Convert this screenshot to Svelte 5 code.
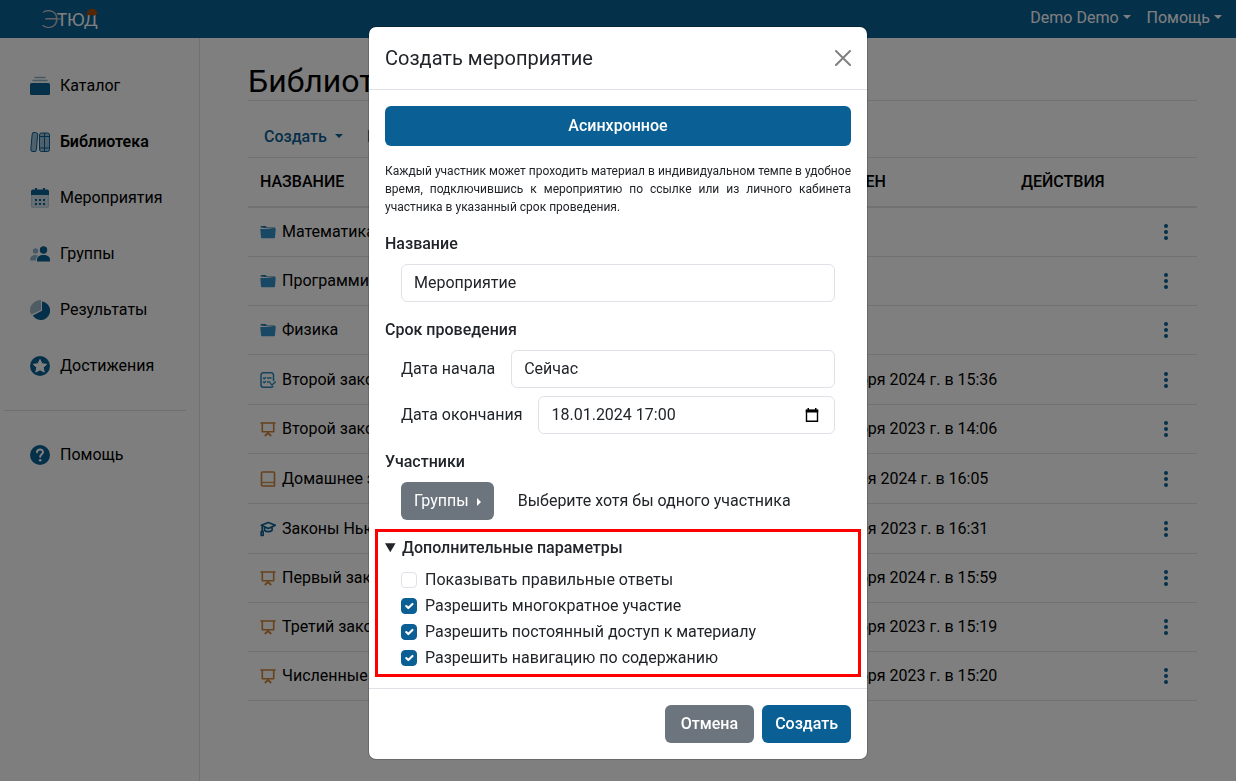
<script lang="ts">
	let name = $state('Мероприятие');
	let start = $state('Сейчас');
	let end = $state('18.01.2024 17:00');

	let options = $state([
		{ id: 'answers', label: 'Показывать правильные ответы', checked: false },
		{ id: 'repeat', label: 'Разрешить многократное участие', checked: true },
		{ id: 'access', label: 'Разрешить постоянный доступ к материалу', checked: true },
		{ id: 'navigation', label: 'Разрешить навигацию по содержанию', checked: true }
	]);

	const menu = [
		{ icon: 'catalog', label: 'Каталог' },
		{ icon: 'library', label: 'Библиотека', active: true },
		{ icon: 'events', label: 'Мероприятия' },
		{ icon: 'groups', label: 'Группы' },
		{ icon: 'results', label: 'Результаты' },
		{ icon: 'awards', label: 'Достижения' }
	];

	const rows = [
		{ icon: 'folder', title: 'Математика', date: '' },
		{ icon: 'folder', title: 'Программирование', date: '' },
		{ icon: 'folder', title: 'Физика', date: '' },
		{ icon: 'quiz', title: 'Второй закон Ньютона', date: '11 ноября 2024 г. в 15:36', tall: true },
		{ icon: 'board', title: 'Второй закон Ньютона', date: '14 ноября 2023 г. в 14:06' },
		{ icon: 'book', title: 'Домашнее задание', date: '5 января 2024 г. в 16:05', tall: true },
		{ icon: 'course', title: 'Законы Ньютона', date: '4 января 2023 г. в 16:31', tall: true },
		{ icon: 'board', title: 'Первый закон Ньютона', date: '11 ноября 2024 г. в 15:59' },
		{ icon: 'board', title: 'Третий закон Ньютона', date: '14 ноября 2023 г. в 15:19' },
		{ icon: 'board', title: 'Численные методы', date: '14 ноября 2023 г. в 15:20' }
	];
</script>

{#snippet menuIcon(icon: string)}
	<svg class="menu-icon" viewBox="0 0 20 20" aria-hidden="true">
		{#if icon === 'catalog'}
			<path d="M5 1.500h10M3 4.500h14" stroke="#8fb3cb" stroke-width="1.500" stroke-linecap="round" />
			<rect x="0" y="7" width="20" height="12" rx="1.500" fill="#0a6094" />
		{:else if icon === 'library'}
			<g fill="#9fc3da" stroke="#0a6094">
				<rect x="1.500" y=".5" width="5.500" height="19" rx="2" transform="rotate(5 4 10)" />
				<rect x="9.500" y="1" width="10" height="18.500" rx="2" />
				<path d="M14.500 1v18.500M9.500 4.500h10M9.500 16h10" />
			</g>
		{:else if icon === 'events'}
			<rect x="1.500" y="3" width="17" height="17" rx="2" fill="#cfdee8" stroke="#b5cbd9" />
			<path d="M1 7V3.500a2 2 0 0 1 2-2h2V0h2v1.500h6V0h2v1.500h2a2 2 0 0 1 2 2V7z" fill="#0a6094" />
			<path d="M5 11h2v2H5zm4 0h2v2H9zm4 0h2v2h-2zM5 15h2v2H5zm4 0h2v2H9zm4 0h2v2h-2z" fill="#0a6094" />
		{:else if icon === 'groups'}
			<circle cx="5.500" cy="7" r="2.700" fill="#8fb3cb" />
			<path d="M0 16.500c0-4 2.500-5.500 5.500-5.500 1 0 2 .2 2.800.6-1.500 1.200-2.300 2.500-2.500 4.900z" fill="#8fb3cb" />
			<circle cx="13.500" cy="6" r="3.700" fill="#0a6094" />
			<path d="M7 17.500v-1.500c0-3.500 2.500-5 6.500-5s6.500 1.500 6.500 5v1.500z" fill="#0a6094" />
		{:else if icon === 'results'}
			<path d="M11 10V0C5 0 0 4.500 0 10c0 1.500.5 3.200 1.200 4.500z" fill="#9fb8c9" />
			<path d="M12 1.500a9.300 9.300 0 1 1-9.200 14l9.200-4.800z" fill="#0a6094" />
		{:else if icon === 'awards'}
			<circle cx="10" cy="10" r="10" fill="#0a6094" />
			<path d="M10 3.500l2 4.300 4.700.5-3.500 3.200 1 4.600-4.200-2.300-4.200 2.300 1-4.600-3.500-3.200 4.700-.5z" fill="#fff" stroke="#fff" stroke-linejoin="round" />
		{:else}
			<circle cx="10" cy="10" r="10" fill="#0a6094" />
			<path d="M7 7.300c.2-3.800 6.300-3.600 6 0-.2 2-2.800 2.200-2.800 4.500" fill="none" stroke="#fff" stroke-width="2" stroke-linecap="round" />
			<circle cx="10.200" cy="15.300" r="1.300" fill="#fff" />
		{/if}
	</svg>
{/snippet}

{#snippet fileIcon(icon: string)}
	<svg class="file-icon" viewBox="0 0 16 16" fill="none" stroke-linecap="round" stroke-linejoin="round" aria-hidden="true">
		{#if icon === 'folder'}
			<path d="M.5 3.500c0-1 .5-1.500 1.500-1.500h3.500l1.500 1.500h7c1 0 1.500.5 1.500 1.500z" fill="#1f76a8" />
			<path d="M.3 5h15.400L15 13c0 .8-.5 1.300-1.300 1.300H2.300c-.8 0-1.300-.5-1.300-1.300z" fill="#3090c7" />
		{:else if icon === 'quiz'}
			<path d="M13.500 8.500V3a2.200 2.200 0 0 0-2.200-2.200H3.200A2.200 2.200 0 0 0 1 3v10a2.200 2.200 0 0 0 2.200 2.200h8.100a2 2 0 0 0 1.500-.7" stroke="#2a86bd" stroke-width="1.500" />
			<path d="M3.500 6l.7.700 1.300-1.300M7.500 6h3.500M3.500 10l.7.700 1.300-1.300M7.500 10h2.500M10.500 11.500l1.500 1.500 3.300-3" stroke="#2a86bd" stroke-width="1.400" />
		{:else if icon === 'board'}
			<path d="M1 2h14M2.300 2v8.700h11.400V2" stroke="#cc8338" stroke-width="1.600" />
			<path d="M8 11v1.500M5.300 14.500L8 12l2.700 2.500" stroke="#cc8338" stroke-width="1.800" />
		{:else if icon === 'book'}
			<path d="M2.500 1h11a1 1 0 0 1 1 1v13h-12a1 1 0 0 1-1-1V2a1 1 0 0 1 1-1z" stroke="#cc8338" stroke-width="1.600" />
			<path d="M2 11.500h12" stroke="#cc9a50" stroke-width="1.400" />
		{:else}
			<path d="M8.300 1.500l7 2.800-7 3.200L1.300 4.300zM4.500 6.500v2.800c2 1.800 5.600 1.800 7.600 0V6.500M2.200 5v5M1.200 10.500h2v4h-2z" stroke="#0a6094" stroke-width="1.600" />
		{/if}
	</svg>
{/snippet}

<div class="page">
	<header class="topbar">
		<a class="logo" href="/" aria-label="ЭТЮД">
			<svg viewBox="0 0 60 30">
				<text class="logo-first" x="1" y="25">Э</text>
				<path d="M5 16h16" stroke="#c8c8c8" />
				<text class="logo-rest" x="17" y="23">ТЮД</text>
				<path d="M47 9c1-3 6-5 10-1l-1 1 2 1c-1 2-3 1-4 3-2-2-4 0-5-1l-3 1z" fill="#a84c08" />
			</svg>
		</a>
		<nav class="top-links">
			<a class="caret" href="#profile">Demo Demo</a>
			<a class="caret" href="#help">Помощь</a>
		</nav>
	</header>

	<div class="layout">
		<aside class="sidebar">
			{#each menu as item}
				<a class="menu-item" class:active={item.active} href="#{item.icon}">
					{@render menuIcon(item.icon)}
					<span>{item.label}</span>
				</a>
			{/each}
			<hr />
			<a class="menu-item" href="#help">
				{@render menuIcon('help')}
				<span>Помощь</span>
			</a>
		</aside>

		<main class="content">
			<h1>Библиотека</h1>
			<div class="toolbar">
				<button class="caret" type="button">Создать</button>
				<button type="button">Импорт</button>
			</div>
			<table>
				<thead>
					<tr>
						<th class="col-name">НАЗВАНИЕ</th>
						<th class="col-date">ИЗМЕНЕН</th>
						<th class="col-actions">ДЕЙСТВИЯ</th>
					</tr>
				</thead>
				<tbody>
					{#each rows as row}
						<tr class:tall={row.tall}>
							<td>
								<div class="file">
									{@render fileIcon(row.icon)}
									<span>{row.title}</span>
								</div>
							</td>
							<td>{row.date}</td>
							<td>
								<button class="dots" type="button" aria-label="Действия">
									<svg viewBox="0 0 4 16" aria-hidden="true">
										<circle cx="2" cy="2" r="2" />
										<circle cx="2" cy="8" r="2" />
										<circle cx="2" cy="14" r="2" />
									</svg>
								</button>
							</td>
						</tr>
					{/each}
				</tbody>
			</table>
		</main>
	</div>
</div>

<div class="backdrop">
	<div class="modal" role="dialog" aria-modal="true" aria-labelledby="modal-title">
		<div class="modal-header">
			<h2 id="modal-title">Создать мероприятие</h2>
			<button class="close" type="button" aria-label="Закрыть">
				<svg viewBox="0 0 16 16" aria-hidden="true">
					<path d="M1 1l14 14M15 1L1 15" />
				</svg>
			</button>
		</div>

		<form class="modal-body">
			<button class="btn primary wide" type="button">Асинхронное</button>
			<p class="hint">
				Каждый участник может проходить материал в индивидуальном темпе в удобное время,
				подключившись к мероприятию по ссылке или из личного кабинета участника в указанный срок
				проведения.
			</p>

			<div class="group">
				<label class="group-title" for="name">Название</label>
				<div class="field">
					<div class="control"><input id="name" type="text" bind:value={name} /></div>
				</div>
			</div>

			<div class="group">
				<div class="group-title">Срок проведения</div>
				<div class="field">
					<label for="start">Дата начала</label>
					<div class="control"><input id="start" type="text" bind:value={start} /></div>
				</div>
				<div class="field">
					<label for="end">Дата окончания</label>
					<div class="control">
						<input id="end" type="text" bind:value={end} />
						<button class="calendar" type="button" aria-label="Выбрать дату">
							<svg viewBox="0 0 14 14" aria-hidden="true">
								<path d="M1.500 2.500h11v10.800h-11z" fill="none" stroke="#000" stroke-width="1.400" />
								<path d="M.8 1.500h12.400v3H.8zM2.500 0h1.500v2H2.500zM10 0h1.500v2H10z" />
							</svg>
						</button>
					</div>
				</div>
			</div>

			<div class="group">
				<div class="group-title">Участники</div>
				<div class="field members">
					<button class="btn secondary dropend" type="button">Группы</button>
					<span>Выберите хотя бы одного участника</span>
				</div>
			</div>

			<details class="extra" open>
				<summary>Дополнительные параметры</summary>
				<div class="checks">
					{#each options as option}
						<label for={option.id}>
							<input id={option.id} type="checkbox" bind:checked={option.checked} />
							{option.label}
						</label>
					{/each}
				</div>
			</details>
		</form>

		<div class="modal-footer">
			<button class="btn secondary cancel" type="button">Отмена</button>
			<button class="btn primary" type="button">Создать</button>
		</div>
	</div>
</div>

<style>
	:global(body) {
		background: #fff;
		font-family: Roboto, 'Liberation Sans', sans-serif;
		font-size: 16px;
		line-height: 24px;
		color: #000;
	}
	:global(*) {
		box-sizing: border-box;
	}
	button,
	input {
		font: inherit;
		color: inherit;
	}
	button {
		border: 0;
		padding: 0;
		background: none;
		cursor: pointer;
	}
	a {
		color: inherit;
		text-decoration: none;
	}

	.page {
		display: flex;
		flex-direction: column;
		height: 100vh;
		overflow: hidden;
	}
	.topbar {
		display: flex;
		flex: none;
		align-items: center;
		justify-content: space-between;
		height: 38px;
		padding: 0 14px 3px 40px;
		background: #0a6094;
		color: #fff;
	}
	.logo svg {
		display: block;
		width: 60px;
		height: 30px;
	}
	.logo text {
		font-family: Lato, sans-serif;
	}
	.logo-first {
		font-size: 26px;
		font-weight: 300;
		fill: #c8c8c8;
	}
	.logo-rest {
		font-size: 17px;
		fill: #fff;
	}
	.top-links {
		display: flex;
		gap: 16px;
	}
	.caret::after {
		content: '';
		display: inline-block;
		margin-left: 4px;
		vertical-align: 4px;
		border-top: 4px solid;
		border-left: 4px solid transparent;
		border-right: 4px solid transparent;
	}

	.layout {
		display: flex;
		flex: 1;
	}
	.sidebar {
		flex: none;
		width: 200px;
		padding-top: 20px;
		border-right: 1px solid #dee2e6;
		background: #fcfcfc;
	}
	.menu-item {
		display: flex;
		align-items: center;
		gap: 10px;
		height: 56px;
		padding-left: 30px;
	}
	.menu-item.active {
		font-weight: 600;
	}
	.menu-icon {
		width: 20px;
		height: 20px;
		fill: none;
	}
	hr {
		margin: 16px 13px 16px 4px;
		border: 0;
		border-top: 1px solid #dcdcdc;
	}

	.content {
		flex: 1;
		padding: 24px 39px 0 48px;
	}
	h1 {
		margin: 0;
		border-bottom: 1px solid #dee2e6;
		font-size: 32px;
		font-weight: 400;
		line-height: 38px;
	}
	.toolbar {
		display: flex;
		gap: 24px;
		padding: 24px 16px 8px;
		color: #0a6094;
		font-weight: 500;
	}
	.toolbar .caret::after {
		margin-left: 8px;
	}
	table {
		width: 100%;
		border-collapse: separate;
		border-spacing: 0;
		table-layout: fixed;
	}
	th {
		height: 51px;
		padding: 0 12px;
		border-top: 1px solid #dee2e6;
		border-bottom: 2px solid #dee2e6;
		font-weight: 500;
		text-align: left;
	}
	td {
		height: 49px;
		padding: 0 12px;
		border-bottom: 1px solid #dee2e6;
		white-space: nowrap;
	}
	.tall td {
		height: 50px;
	}
	.col-date {
		width: 211px;
	}
	.col-actions {
		width: 188px;
	}
	.file {
		display: flex;
		align-items: center;
		gap: 6px;
	}
	.file-icon {
		width: 16px;
		height: 16px;
	}
	.dots {
		display: block;
		margin-left: auto;
		padding: 4px 17px;
	}
	.dots svg {
		display: block;
		width: 4px;
		height: 16px;
		fill: #0a6094;
	}

	.backdrop {
		position: fixed;
		inset: 0;
		padding: 26px 16px;
		background: rgba(0, 0, 0, 0.5);
		overflow: auto;
	}
	.modal {
		max-width: 500px;
		margin: 0 auto;
		border: 1px solid rgba(0, 0, 0, 0.175);
		border-radius: 8px;
		background: #fff;
		background-clip: padding-box;
		color: #212529;
	}
	.modal-header {
		display: flex;
		align-items: center;
		justify-content: space-between;
		padding: 16px;
		border-bottom: 1px solid #dee2e6;
	}
	h2 {
		margin: 0;
		font-size: 20px;
		font-weight: 400;
		line-height: 30px;
	}
	.close svg {
		display: block;
		width: 16px;
		height: 16px;
		stroke: #808080;
		stroke-width: 2;
		stroke-linecap: round;
	}
	.modal-body {
		padding: 16px 16px 11px;
	}
	.btn {
		height: 38px;
		padding: 0 13px;
		border-radius: 6px;
		color: #fff;
		font-weight: 500;
	}
	.primary {
		background: #0a6094;
	}
	.secondary {
		background: #6c757d;
	}
	.wide {
		width: 100%;
		height: 40px;
	}
	.hint {
		margin: 16px 0;
		font-size: 12px;
		line-height: 18px;
		text-align: justify;
	}
	.group {
		display: flex;
		flex-direction: column;
		gap: 8px;
		margin-bottom: 16px;
	}
	.group-title,
	summary {
		font-weight: 500;
	}
	.field {
		display: flex;
		align-items: center;
		gap: 16px;
		padding: 0 16px;
	}
	.control {
		display: flex;
		flex: 1;
		align-items: center;
		height: 38px;
		padding: 0 15px 0 12px;
		border: 1px solid #dee2e6;
		border-radius: 6px;
	}
	.control input {
		flex: 1;
		min-width: 0;
		padding: 0;
		border: 0;
		outline: 0;
		background: none;
	}
	.calendar svg {
		display: block;
		width: 14px;
		height: 14px;
	}
	.members {
		gap: 24px;
	}
	.dropend {
		font-weight: 400;
	}
	.dropend::after {
		content: '';
		display: inline-block;
		margin: 0 0 0 8px;
		border-left: 4px solid;
		border-top: 4px solid transparent;
		border-bottom: 4px solid transparent;
	}
	.extra {
		margin: -7px -10px 0;
		padding: 4px 7px 4px;
		border: 3px solid #f00;
	}
	.checks {
		display: flex;
		flex-direction: column;
		gap: 2px;
		padding: 8px 16px 0;
	}
	.checks label {
		display: flex;
		align-items: center;
		gap: 8px;
	}
	input[type='checkbox'] {
		appearance: none;
		width: 16px;
		height: 16px;
		margin: 0;
		border: 1px solid #dee2e6;
		border-radius: 4px;
	}
	input[type='checkbox']:checked {
		border-color: #0a6094;
		background: #0a6094
			url("data:image/svg+xml,%3csvg xmlns='http://www.w3.org/2000/svg' viewBox='0 0 20 20'%3e%3cpath fill='none' stroke='%23fff' stroke-linecap='round' stroke-linejoin='round' stroke-width='3' d='m6 10 3 3 6-6'/%3e%3c/svg%3e");
	}
	.modal-footer {
		display: flex;
		justify-content: flex-end;
		gap: 8px;
		padding: 16px;
		border-top: 1px solid #dee2e6;
	}
	.cancel {
		padding: 0 16px;
	}
</style>
